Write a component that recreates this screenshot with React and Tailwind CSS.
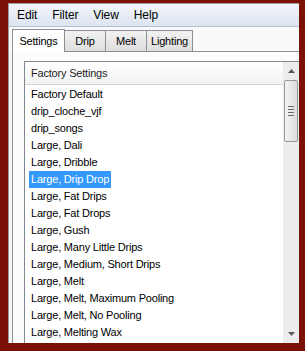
import React from 'react';

const items = [
  'Factory Default',
  'drip_cloche_vjf',
  'drip_songs',
  'Large, Dali',
  'Large, Dribble',
  'Large, Drip Drop',
  'Large, Fat Drips',
  'Large, Fat Drops',
  'Large, Gush',
  'Large, Many Little Drips',
  'Large, Medium, Short Drips',
  'Large, Melt',
  'Large, Melt, Maximum Pooling',
  'Large, Melt, No Pooling',
  'Large, Melting Wax',
];

const tabs = ['Drip', 'Melt', 'Lighting'];

const App = () => {
  return (
    <div
      className="w-[305px] h-[351px] bg-[#7a1006] pt-[3px] pl-[8px] pr-[6px] pb-[8px] overflow-hidden"
      style={{ fontFamily: '"Liberation Sans", Arial, sans-serif' }}
    >
      <div className="h-full flex flex-col border-l border-t border-[#9c9c9c] bg-[#f7f7f7]">
        {/* menu bar */}
        <div className="h-[23px] shrink-0 flex items-center pl-[8px] gap-[15px] text-[12px] tracking-[-0.1px] text-black bg-gradient-to-b from-[#f3f6fb] to-[#dce4f1] border-b border-[#b6bfcf]">
          <span>Edit</span>
          <span>Filter</span>
          <span>View</span>
          <span>Help</span>
        </div>

        {/* tab strip */}
        <div className="h-[24px] shrink-0 flex items-end pl-[3px] bg-[#fafafa] text-[11px] tracking-[-0.2px]">
          <div className="h-[23px] w-[53px] flex items-center justify-center bg-white border border-b-0 border-[#8c8e94] relative top-[1px] z-10">
            Settings
          </div>
          {tabs.map((t, i) => (
            <div
              key={t}
              className={`h-[21px] flex items-center justify-center bg-gradient-to-b from-[#f2f2f2] to-[#dedede] border border-b-0 border-[#8c8e94] ${
                i === 0 ? 'w-[41px] border-l-0' : i === 1 ? 'w-[42px] -ml-px' : 'w-[47px] -ml-px'
              }`}
            >
              {t}
            </div>
          ))}
        </div>

        {/* tab panel */}
        <div className="flex-1 min-h-0 border-t border-l border-[#8c8e94] ml-[3px] bg-[#fcfcfc] pl-[11px] pt-[9px]">
          <div className="h-full flex border border-r-0 border-b-0 border-[#828790] bg-white text-[11px] tracking-[-0.2px]">
            <div className="flex-1 min-w-0 flex flex-col">
              <div className="h-[23px] shrink-0 flex items-center pl-[6px] text-[#1e1e1e] bg-gradient-to-b from-white to-[#f1f2f4] border-b border-[#d5d5d5]">
                Factory Settings
              </div>
              <div className="pt-[1px] pl-[4px]">
                {items.map((it) => (
                  <div key={it} className="h-[17px] flex items-center">
                    <span
                      className={`px-[2px] h-[17px] flex items-center whitespace-nowrap ${
                        it === 'Large, Drip Drop' ? 'bg-[#3399ff] text-white' : 'text-black'
                      }`}
                    >
                      {it}
                    </span>
                  </div>
                ))}
              </div>
            </div>

            {/* scrollbar */}
            <div className="w-[16px] shrink-0 bg-[#ececec] flex flex-col items-center">
              <div className="h-[18px] w-full flex items-center justify-center">
                <svg width="7" height="4" viewBox="0 0 7 4">
                  <path d="M0 4 L3.5 0 L7 4 Z" fill="#5a5a5a" />
                </svg>
              </div>
              <div className="h-[62px] w-[14px] rounded-[2px] border border-[#999] bg-gradient-to-r from-[#f4f4f4] to-[#dcdcdc] flex flex-col items-center justify-center gap-[2px]">
                <div className="w-[6px] h-px bg-[#666]" />
                <div className="w-[6px] h-px bg-[#666]" />
                <div className="w-[6px] h-px bg-[#666]" />
                <div className="w-[6px] h-px bg-[#666]" />
              </div>
              <div className="flex-1" />
              <div className="h-[18px] w-full flex items-center justify-center">
                <svg width="7" height="4" viewBox="0 0 7 4">
                  <path d="M0 0 L3.5 4 L7 0 Z" fill="#5a5a5a" />
                </svg>
              </div>
            </div>
          </div>
        </div>
      </div>
    </div>
  );
};

export default App;
